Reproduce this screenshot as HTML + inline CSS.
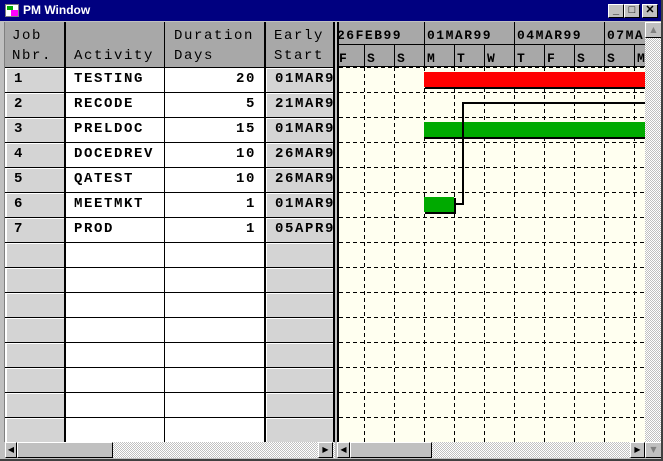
<!DOCTYPE html>
<html><head><meta charset="utf-8"><style>
*{margin:0;padding:0;box-sizing:border-box}
body{width:663px;height:461px;overflow:hidden;background:#c0c0c0;position:relative;font-family:"Liberation Mono",monospace;font-weight:bold;font-size:14px;color:#000}
.a{position:absolute}
.title{left:0;top:0;width:663px;height:21px;background:#000080;color:#fff;font-family:"Liberation Sans",sans-serif;font-size:12px;line-height:21px;padding-left:23px}
.btn{top:4px;width:16px;height:14px;background:#c0c0c0;border:1px solid;border-color:#fff #000 #000 #fff;font-family:"Liberation Sans",sans-serif;font-size:11px;line-height:11px;text-align:center;color:#000}
.hdr{background:#a8a8a8;line-height:20px;letter-spacing:1.6px;font-weight:normal}
.t{letter-spacing:1.6px;line-height:25px}
.dith{background:repeating-conic-gradient(#c0c0c0 0 25%,#fff 0 50%) 0 0/2px 2px}
.arr{background:#c0c0c0;border:1px solid;border-color:#fff #000 #000 #fff;font-size:8px;line-height:14px;text-align:center;font-family:"DejaVu Sans",sans-serif}
</style></head><body>
<div class="a title">PM Window</div>
<div class="a" style="left:5px;top:4px;width:14px;height:13px;background:#fff;border:1px solid #808080"><div class="a" style="left:5px;top:5px;width:7px;height:6px;background:#f0f"></div><div class="a" style="left:1px;top:1px;width:6px;height:4px;background:#0a0"></div></div>
<div class="a btn" style="left:608px">_</div>
<div class="a btn" style="left:624px">□</div>
<div class="a btn" style="left:642px">✕</div>

<div class="a" style="left:5px;top:22px;width:331px;height:420px;background:#fff"></div>
<div class="a hdr" style="left:5px;top:22px;width:331px;height:45px"></div>
<div class="a hdr" style="left:12px;top:26px">Job<br>Nbr.</div>
<div class="a hdr" style="left:74px;top:46px">Activity</div>
<div class="a hdr" style="left:174px;top:26px">Duration<br>Days</div>
<div class="a hdr" style="left:274px;top:26px">Early<br>Start</div>
<div class="a" style="left:7px;top:67px;width:57px;height:375px;background:#d4d4d4"></div>
<div class="a" style="left:267px;top:67px;width:67px;height:375px;background:#d4d4d4"></div>
<div class="a" style="left:5px;top:67px;width:331px;height:375px;background:repeating-linear-gradient(to bottom,#000 0 1px,#fff 1px 2px,transparent 2px 25px)"></div>
<div class="a" style="left:64px;top:22px;width:2px;height:420px;background:#000"></div>
<div class="a" style="left:164px;top:22px;width:1px;height:420px;background:#000"></div>
<div class="a" style="left:264px;top:22px;width:2px;height:420px;background:#000"></div>
<div class="a" style="left:333px;top:22px;width:2px;height:420px;background:#000"></div>
<div class="a" style="left:335px;top:22px;width:2px;height:420px;background:#c0c0c0"></div>
<div class="a" style="left:337px;top:22px;width:2px;height:420px;background:#000"></div>
<div class="a" style="left:4px;top:22px;width:1px;height:420px;background:#808080"></div>

<div class="a t" style="left:14px;top:67px">1<br>2<br>3<br>4<br>5<br>6<br>7</div>
<div class="a t" style="left:74px;top:67px">TESTING<br>RECODE<br>PRELDOC<br>DOCEDREV<br>QATEST<br>MEETMKT<br>PROD</div>
<div class="a t" style="left:180px;top:67px;width:76px;text-align:right">20<br>5<br>15<br>10<br>10<br>1<br>1</div>
<div class="a t" style="left:275px;top:67px;width:58px;overflow:hidden;white-space:nowrap">01MAR99<br>21MAR99<br>01MAR99<br>26MAR99<br>26MAR99<br>01MAR99<br>05APR99</div>

<svg class="a" style="left:339px;top:22px" width="306" height="420">
<rect x="0" y="0" width="306" height="420" fill="#fffff0"/>
<rect x="0" y="0" width="306" height="45" fill="#a8a8a8"/>
<g stroke="#000" stroke-width="1">
<line x1="0" y1="22.5" x2="306" y2="22.5"/>
<line x1="0" y1="44.5" x2="306" y2="44.5"/>
<line x1="85.5" y1="0" x2="85.5" y2="45"/><line x1="175.5" y1="0" x2="175.5" y2="45"/><line x1="265.5" y1="0" x2="265.5" y2="45"/>
<line x1="25.5" y1="22" x2="25.5" y2="45"/><line x1="55.5" y1="22" x2="55.5" y2="45"/><line x1="115.5" y1="22" x2="115.5" y2="45"/><line x1="145.5" y1="22" x2="145.5" y2="45"/><line x1="205.5" y1="22" x2="205.5" y2="45"/><line x1="235.5" y1="22" x2="235.5" y2="45"/><line x1="295.5" y1="22" x2="295.5" y2="45"/>
</g>
<g font-family="Liberation Mono, monospace" font-size="13" font-weight="bold" letter-spacing="1.5">
<text x="-2" y="17">26FEB99</text><text x="88" y="17">01MAR99</text><text x="178" y="17">04MAR99</text><text x="268" y="17">07MAR99</text>
<text x="0" y="40">F</text><text x="28" y="40">S</text><text x="58" y="40">S</text><text x="88" y="40">M</text><text x="118" y="40">T</text><text x="148" y="40">W</text><text x="178" y="40">T</text><text x="208" y="40">F</text><text x="238" y="40">S</text><text x="268" y="40">S</text><text x="298" y="40">M</text>
</g>
<g stroke="#000" stroke-width="1" stroke-dasharray="4,3">
<line x1="25.5" y1="45" x2="25.5" y2="420"/><line x1="55.5" y1="45" x2="55.5" y2="420"/><line x1="85.5" y1="45" x2="85.5" y2="420"/><line x1="115.5" y1="45" x2="115.5" y2="420"/><line x1="145.5" y1="45" x2="145.5" y2="420"/><line x1="175.5" y1="45" x2="175.5" y2="420"/><line x1="205.5" y1="45" x2="205.5" y2="420"/><line x1="235.5" y1="45" x2="235.5" y2="420"/><line x1="265.5" y1="45" x2="265.5" y2="420"/><line x1="295.5" y1="45" x2="295.5" y2="420"/>
<line x1="0" y1="45.5" x2="306" y2="45.5"/>
<line x1="0" y1="70.5" x2="306" y2="70.5"/><line x1="0" y1="95.5" x2="306" y2="95.5"/><line x1="0" y1="120.5" x2="306" y2="120.5"/><line x1="0" y1="145.5" x2="306" y2="145.5"/><line x1="0" y1="170.5" x2="306" y2="170.5"/><line x1="0" y1="195.5" x2="306" y2="195.5"/><line x1="0" y1="220.5" x2="306" y2="220.5"/><line x1="0" y1="245.5" x2="306" y2="245.5"/><line x1="0" y1="270.5" x2="306" y2="270.5"/><line x1="0" y1="295.5" x2="306" y2="295.5"/><line x1="0" y1="320.5" x2="306" y2="320.5"/><line x1="0" y1="345.5" x2="306" y2="345.5"/><line x1="0" y1="370.5" x2="306" y2="370.5"/><line x1="0" y1="395.5" x2="306" y2="395.5"/>
</g>
<rect x="85" y="50" width="221" height="15" fill="#f00"/><rect x="86" y="65" width="220" height="2" fill="#000"/>
<rect x="85" y="100" width="221" height="15" fill="#00aa00"/><rect x="86" y="115" width="220" height="2" fill="#000"/>
<rect x="85" y="175" width="30" height="15" fill="#00aa00"/><rect x="86" y="190" width="30" height="2" fill="#000"/><rect x="115" y="176" width="2" height="16" fill="#000"/>
<path d="M116 182H124V81H306" fill="none" stroke="#000" stroke-width="2"/>
</svg>

<div class="a dith" style="left:645px;top:22px;width:17px;height:436px"></div>
<div class="a arr" style="left:645px;top:22px;width:17px;height:16px;color:#808080">▲</div>
<div class="a arr" style="left:645px;top:442px;width:17px;height:16px;color:#808080">▼</div>
<div class="a dith" style="left:5px;top:442px;width:330px;height:16px"></div>
<div class="a arr" style="left:5px;top:442px;width:12px;height:16px">◀</div>
<div class="a arr" style="left:17px;top:442px;width:96px;height:16px"></div>
<div class="a arr" style="left:318px;top:442px;width:15px;height:16px">▶</div>
<div class="a dith" style="left:337px;top:442px;width:308px;height:16px"></div>
<div class="a arr" style="left:337px;top:442px;width:13px;height:16px">◀</div>
<div class="a arr" style="left:350px;top:442px;width:82px;height:16px"></div>
<div class="a arr" style="left:630px;top:442px;width:15px;height:16px">▶</div>
<div class="a" style="left:0;top:459px;width:663px;height:2px;background:#404040"></div>
<div class="a" style="left:661px;top:0;width:2px;height:461px;background:#404040"></div>
</body></html>
